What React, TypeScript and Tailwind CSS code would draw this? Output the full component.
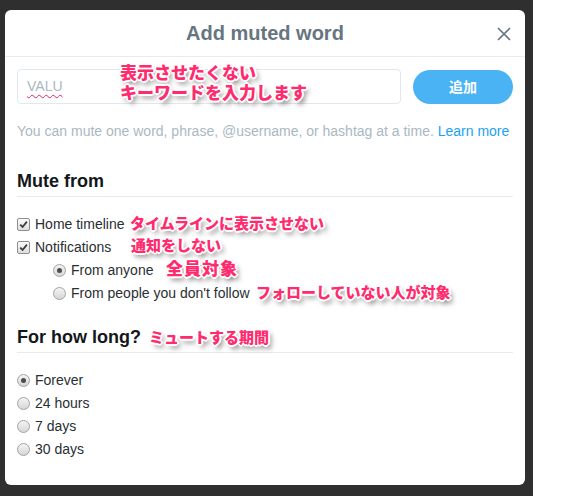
const note =
  "absolute whitespace-nowrap font-black text-[#ff2b6e] [font-family:'Noto_Sans_CJK_JP',sans-serif] [text-shadow:1px_1px_0_#fff,-1px_-1px_0_#fff,1px_-1px_0_#fff,-1px_1px_0_#fff,0_2px_0_#fff,0_-2px_0_#fff,2px_0_0_#fff,-2px_0_0_#fff,3px_4px_5px_rgba(0,0,0,0.5)]";

function Check() {
  return (
    <span className="flex h-[13px] w-[13px] shrink-0 items-center justify-center rounded-[2px] border border-[#8e8f8f] bg-gradient-to-b from-[#fbfbfb] to-[#dedede]">
      <svg width="9" height="9" viewBox="0 0 9 9">
        <path d="M1.2 4.6 L3.6 7 L7.9 1.6" fill="none" stroke="#3b3b3b" strokeWidth="1.8" />
      </svg>
    </span>
  );
}

function Radio({ on }: { on?: boolean }) {
  return (
    <span className="flex h-[13px] w-[13px] shrink-0 items-center justify-center rounded-full border border-[#a3a3a3] bg-gradient-to-b from-[#f4f4f4] to-[#d6d6d6]">
      {on && <span className="h-[5px] w-[5px] rounded-full bg-[#4d4d4d]" />}
    </span>
  );
}

function Row({ children, label, indent }: { children: React.ReactNode; label: string; indent?: boolean }) {
  return (
    <div className={`flex h-[23px] items-center gap-[5px] ${indent ? "pl-[36px]" : ""}`}>
      {children}
      <span className="text-[14px] text-[#292f33]">{label}</span>
    </div>
  );
}

export default function App() {
  return (
    <div className="relative flex h-[496px] w-[572px] overflow-hidden bg-white [font-family:'Liberation_Sans',Arial,sans-serif]">
      <div className="h-full w-[533px] bg-[#2f2f2f] pl-[5px] pt-[10px]">
        <div className="h-[475px] w-[520px] rounded-[6px] bg-white">
          <div className="relative flex h-[47px] items-center justify-center border-b border-[#e6ecf0]">
            <h1 className="text-[20px] font-bold text-[#66757f]">Add muted word</h1>
            <svg className="absolute right-[14px] top-[17px]" width="14" height="14" viewBox="0 0 14 14">
              <path d="M1 1 L13 13 M13 1 L1 13" stroke="#66757f" strokeWidth="1.7" />
            </svg>
          </div>

          <div className="px-[12px]">
            <div className="mt-[12px] flex items-center gap-[12px]">
              <div className="flex h-[35px] w-[384px] items-center rounded-[4px] border border-[#e1e8ed] px-[9px]">
                <span className="text-[14px] text-[#aab8c2] underline decoration-wavy decoration-[#e0245e] decoration-1 underline-offset-[3px]">
                  VALU
                </span>
              </div>
              <button className="h-[34px] w-[100px] rounded-full bg-[#4ab3f4] text-[14px] font-bold text-white [font-family:'Noto_Sans_CJK_JP',sans-serif]">
                追加
              </button>
            </div>

            <p className="mt-[17px] text-[14px] leading-[20px] text-[#aab8c2]">
              You can mute one word, phrase, @username, or hashtag at a time.{" "}
              <span className="text-[#1da1f2]">Learn more</span>
            </p>

            <h2 className="mt-[29px] border-b border-[#e6ecf0] pb-[4px] text-[18px] font-bold leading-[22px] text-[#14171a]">
              Mute from
            </h2>
            <div className="mt-[16px]">
              <Row label="Home timeline">
                <Check />
              </Row>
              <Row label="Notifications">
                <Check />
              </Row>
              <Row label="From anyone" indent>
                <Radio on />
              </Row>
              <Row label="From people you don't follow" indent>
                <Radio />
              </Row>
            </div>

            <h2 className="mt-[21px] border-b border-[#e6ecf0] pb-[4px] text-[18px] font-bold leading-[22px] text-[#14171a]">
              For how long?
            </h2>
            <div className="mt-[16px]">
              <Row label="Forever">
                <Radio on />
              </Row>
              <Row label="24 hours">
                <Radio />
              </Row>
              <Row label="7 days">
                <Radio />
              </Row>
              <Row label="30 days">
                <Radio />
              </Row>
            </div>
          </div>
        </div>
      </div>

      <div className={`${note} left-[120px] top-[62px] text-[17px] leading-[20px]`}>
        表示させたくない
        <br />
        キーワードを入力します
      </div>
      <div className={`${note} left-[130px] top-[212px] text-[15px] leading-[22px]`}>タイムラインに表示させない</div>
      <div className={`${note} left-[131px] top-[234px] text-[15px] leading-[22px]`}>通知をしない</div>
      <div className={`${note} left-[166px] top-[257px] text-[17px] leading-[22px] tracking-[1px]`}>全員対象</div>
      <div className={`${note} left-[256px] top-[281px] text-[15px] leading-[22px]`}>フォローしていない人が対象</div>
      <div className={`${note} left-[149px] top-[326px] text-[15px] leading-[22px]`}>ミュートする期間</div>
    </div>
  );
}
